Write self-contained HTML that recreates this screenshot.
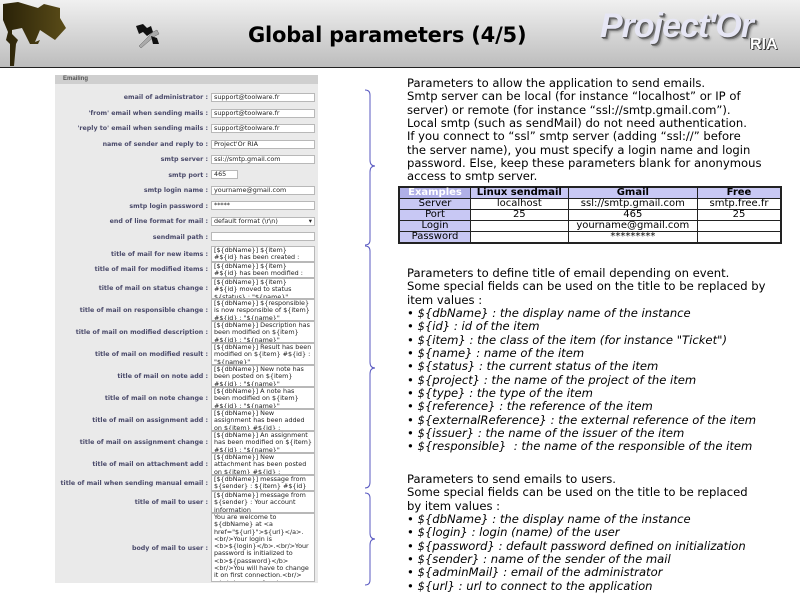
<!DOCTYPE html>
<html><head><meta charset="utf-8"><style>
body{margin:0;width:800px;height:600px;overflow:hidden;background:#fff;position:relative;font-family:"DejaVu Sans","Liberation Sans",sans-serif}
#hdr{position:absolute;left:0;top:0;width:800px;height:67px;background:linear-gradient(#f0f0f0,#bdbdbd);border-bottom:1px solid #222}
#title{position:absolute;left:248px;top:23px;font:bold 21px "DejaVu Sans",sans-serif;color:#000;letter-spacing:-0.2px}
#logo{position:absolute;left:600px;top:7px;font:italic bold 34px "Liberation Sans",sans-serif;color:#e6e6f4;text-shadow:1px 1px 0 #555,2px 2px 0 #777,3px 3px 2px #999;letter-spacing:-1px}
#ria{position:absolute;left:750px;top:36px;font:bold 16px "Liberation Sans",sans-serif;color:#fff;text-shadow:1px 1px 0 #333,-1px 0 0 #555}
#panel{position:absolute;left:55px;top:75px;width:263px;height:508px;background:#eaeaea}
#ph{position:absolute;left:0;top:0;width:263px;height:9px;background:#cfcfcf;font:bold 6px sans-serif;color:#555;line-height:9px;padding-left:8px;box-sizing:border-box}
.l{position:absolute;right:110px;font:bold 6.3px "DejaVu Sans",sans-serif;color:#4a4a6a;white-space:nowrap;text-align:right}
.i{position:absolute;left:156px;width:104px;background:#fff;border:1px solid #b8b8b8;font:6.4px "DejaVu Sans",sans-serif;color:#222;line-height:7.3px;padding:0 2px;box-sizing:border-box;overflow:hidden}
.t{position:absolute;left:407px;font-size:11.6px;line-height:13.35px;color:#000;white-space:nowrap}
.t i{font-style:italic}
table{position:absolute;left:398px;top:186px;width:384px;border-collapse:collapse;font-size:10px;border:2px solid #222}
td{border:1px solid #222;text-align:center;height:10px;line-height:10px;padding:0}
td.h{background:#c8c8f4}
tr:first-child td{background:#c8c8f4;font-weight:bold}
tr:first-child td:first-child{background:#b0b0e8;color:#fff}
</style></head><body>
<div id="hdr">
<svg width="70" height="68" style="position:absolute;left:0;top:0"><defs><linearGradient id="g" x1="0" x2="1"><stop offset="0" stop-color="#2a2208"/><stop offset="1" stop-color="#5a4c18"/></linearGradient></defs>
<path d="M3 4 L18 2 L38 8 L44 4 L60 8 L60 18 L66 28 L55 40 L40 30 L35 42 L40 40 L38 44 L30 44 L22 28 L12 30 L12 34 L18 40 L16 44 L14 66 L10 66 L10 44 L6 40 L8 32 L3 20Z" fill="url(#g)"/></svg>
<svg width="30" height="30" style="position:absolute;left:133px;top:22px"><path d="M3 4 L10 2 L14 6 L18 4 L20 10 L14 14 L10 10 L6 12Z" fill="#111"/><path d="M6 24 L20 10 L24 8 L26 12 L22 14 L8 26Z" fill="#aaa" stroke="#666" stroke-width=".5"/><path d="M18 14 L24 16 L26 22 L20 22Z" fill="#111"/></svg>
<div id="title">Global parameters (4/5)</div>
<div id="logo">Project'Or</div><div id="ria">RIA</div>
</div>
<div id="panel"><div id="ph">Emailing</div>
<div class="l" style="top:19px">email of administrator :</div><div class="i" style="top:18px;height:9px">support@toolware.fr</div>
<div class="l" style="top:35px">'from' email when sending mails :</div><div class="i" style="top:34px;height:9px">support@toolware.fr</div>
<div class="l" style="top:50px">'reply to' email when sending mails :</div><div class="i" style="top:49px;height:9px">support@toolware.fr</div>
<div class="l" style="top:66px">name of sender and reply to :</div><div class="i" style="top:65px;height:9px">Project'Or RIA</div>
<div class="l" style="top:81px">smtp server :</div><div class="i" style="top:80px;height:9px">ssl://smtp.gmail.com</div>
<div class="l" style="top:97px">smtp port :</div><div class="i" style="top:95px;height:9px;width:27px">465</div>
<div class="l" style="top:112px">smtp login name :</div><div class="i" style="top:111px;height:9px">yourname@gmail.com</div>
<div class="l" style="top:128px">smtp login password :</div><div class="i" style="top:126px;height:9px">*****</div>
<div class="l" style="top:143px">end of line format for mail :</div><div class="i" style="top:142px;height:9px">default format (\r\n)<span style="position:absolute;right:2px">▾</span></div>
<div class="l" style="top:159px">sendmail path :</div><div class="i" style="top:157px;height:9px"></div>
<div class="l" style="top:176px">title of mail for new items :</div><div class="i" style="top:171px;height:16px">[${dbName}] ${item} #${id} has been created : "${name}"</div>
<div class="l" style="top:191px">title of mail for modified items :</div><div class="i" style="top:187px;height:16px">[${dbName}] ${item} #${id} has been modified : "${name}"</div>
<div class="l" style="top:210px">title of mail on status change :</div><div class="i" style="top:203px;height:21px">[${dbName}] ${item} #${id} moved to status ${status} : "${name}"</div>
<div class="l" style="top:232px">title of mail on responsible change :</div><div class="i" style="top:224px;height:22px">[${dbName}] ${responsible} is now responsible of ${item} #${id} : "${name}"</div>
<div class="l" style="top:254px">title of mail on modified description :</div><div class="i" style="top:246px;height:22px">[${dbName}] Description has been modified on ${item} #${id} : "${name}"</div>
<div class="l" style="top:276px">title of mail on modified result :</div><div class="i" style="top:268px;height:22px">[${dbName}] Result has been modified on ${item} #${id} : "${name}"</div>
<div class="l" style="top:298px">title of mail on note add :</div><div class="i" style="top:290px;height:22px">[${dbName}] New note has been posted on ${item} #${id} : "${name}"</div>
<div class="l" style="top:320px">title of mail on note change :</div><div class="i" style="top:312px;height:22px">[${dbName}] A note has been modified on ${item} #${id} : "${name}"</div>
<div class="l" style="top:342px">title of mail on assignment add :</div><div class="i" style="top:334px;height:22px">[${dbName}] New assignment has been added on ${item} #${id} : "${name}"</div>
<div class="l" style="top:364px">title of mail on assignment change :</div><div class="i" style="top:356px;height:22px">[${dbName}] An assignment has been modified on ${item} #${id} : "${name}"</div>
<div class="l" style="top:386px">title of mail on attachment add :</div><div class="i" style="top:378px;height:22px">[${dbName}] New attachment has been posted on ${item} #${id} : "${name}"</div>
<div class="l" style="top:405px">title of mail when sending manual email :</div><div class="i" style="top:400px;height:16px">[${dbName}] message from ${sender} : ${item} #${id}</div>
<div class="l" style="top:424px">title of mail to user :</div><div class="i" style="top:416px;height:22px">[${dbName}] message from ${sender} : Your account information</div>
<div class="l" style="top:470px">body of mail to user :</div><div class="i" style="top:438px;height:69px">You are welcome to ${dbName} at &lt;a href="${url}"&gt;${url}&lt;/a&gt;.&lt;br/&gt;Your login is &lt;b&gt;${login}&lt;/b&gt;.&lt;br/&gt;Your password is initialized to &lt;b&gt;${password}&lt;/b&gt;&lt;br/&gt;You will have to change it on first connection.&lt;br/&gt;&lt;br/&gt;In case of an issue contact your administrator at &lt;b&gt;${adminMail}&lt;/b&gt;.</div>
</div>
<svg width="20" height="600" style="position:absolute;left:360px;top:0" fill="none" stroke="#5858c0" stroke-width="1">
<path d="M5 90 Q10 90 10 95 L10 160 Q10 166 15 166 Q10 166 10 172 L10 240 Q10 245 5 245"/>
<path d="M5 246 Q10 246 10 251 L10 362 Q10 368 15 368 Q10 368 10 374 L10 482 Q10 488 5 488"/>
<path d="M5 493 Q10 493 10 498 L10 533 Q10 539 15 539 Q10 539 10 545 L10 580 Q10 585 5 585"/>
</svg>
<div class="t" style="top:77px">Parameters to allow the application to send emails.<br>Smtp server can be local (for instance “localhost” or IP of<br>server) or remote (for instance “ssl://smtp.gmail.com”).<br>Local smtp (such as sendMail) do not need authentication.<br>If you connect to “ssl” smtp server (adding “ssl://” before<br>the server name), you must specify a login name and login<br>password. Else, keep these parameters blank for anonymous<br>access to smtp server.</div>
<table>
<tr><td style="width:70px">Examples</td><td>Linux sendmail</td><td>Gmail</td><td style="width:82px">Free</td></tr>
<tr><td class="h">Server</td><td>localhost</td><td>ssl://smtp.gmail.com</td><td>smtp.free.fr</td></tr>
<tr><td class="h">Port</td><td>25</td><td>465</td><td>25</td></tr>
<tr><td class="h">Login</td><td></td><td>yourname@gmail.com</td><td></td></tr>
<tr><td class="h">Password</td><td></td><td>*********</td><td></td></tr>
</table>
<div class="t" style="top:267px">Parameters to define title of email depending on event.<br>Some special fields can be used on the title to be replaced by<br>item values :<br>• <i>${dbName} : the display name of the instance</i><br>• <i>${id} : id of the item</i><br>• <i>${item} : the class of the item (for instance "Ticket")</i><br>• <i>${name} : name of the item</i><br>• <i>${status} : the current status of the item</i><br>• <i>${project} : the name of the project of the item</i><br>• <i>${type} : the type of the item</i><br>• <i>${reference} : the reference of the item</i><br>• <i>${externalReference} : the external reference of the item</i><br>• <i>${issuer} : the name of the issuer of the item</i><br>• <i>${responsible}&nbsp; : the name of the responsible of the item</i></div>
<div class="t" style="top:473px">Parameters to send emails to users.<br>Some special fields can be used on the title to be replaced<br>by item values :<br>• <i>${dbName} : the display name of the instance</i><br>• <i>${login} : login (name) of the user</i><br>• <i>${password} : default password defined on initialization</i><br>• <i>${sender} : name of the sender of the mail</i><br>• <i>${adminMail} : email of the administrator</i><br>• <i>${url} : url to connect to the application</i></div>
</body></html>
